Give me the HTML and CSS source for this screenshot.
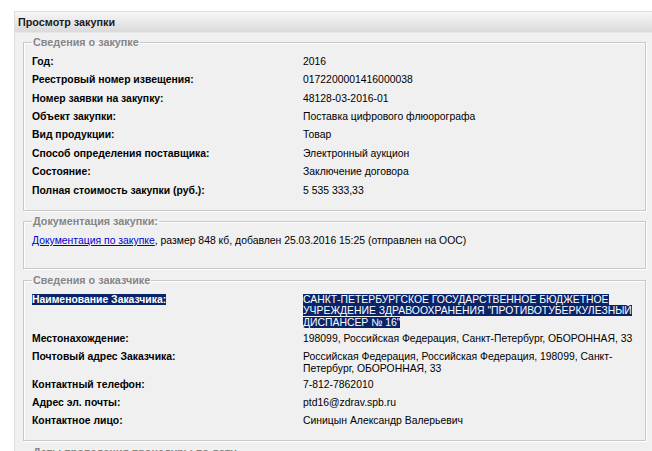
FILE: index.html
```html
<!DOCTYPE html>
<html lang="ru">
<head>
    <meta charset="UTF-8">
    <title>Просмотр закупки</title>
    <link rel="stylesheet" href="styles.css">
</head>
<body>

    <div class="panel">
        <div class="panel-header">Просмотр закупки</div>

        <div class="panel-body">
            <fieldset class="group">
                <legend>Сведения о закупке</legend>
                <table class="info">
                    <tr><td class="label">Год:</td><td>2016</td></tr>
                    <tr><td class="label">Реестровый номер извещения:</td><td>0172200001416000038</td></tr>
                    <tr><td class="label">Номер заявки на закупку:</td><td>48128-03-2016-01</td></tr>
                    <tr><td class="label">Объект закупки:</td><td>Поставка цифрового флюорографа</td></tr>
                    <tr><td class="label">Вид продукции:</td><td>Товар</td></tr>
                    <tr><td class="label">Способ определения поставщика:</td><td>Электронный аукцион</td></tr>
                    <tr><td class="label">Состояние:</td><td>Заключение договора</td></tr>
                    <tr><td class="label">Полная стоимость закупки (руб.):</td><td>5 535 333,33</td></tr>
                </table>
            </fieldset>

            <fieldset class="group docs">
                <legend>Документация закупки:</legend>
                <p class="doc-line"><a href="#">Документация по закупке</a>, размер 848 кб, добавлен 25.03.2016 15:25 (отправлен на ООС)</p>
            </fieldset>

            <fieldset class="group">
                <legend>Сведения о заказчике</legend>
                <table class="info">
                    <tr class="tight">
                        <td class="label"><span class="sel">Наименование Заказчика:</span></td>
                        <td class="nowrap"><span class="sel">САНКТ-ПЕТЕРБУРГСКОЕ ГОСУДАРСТВЕННОЕ БЮДЖЕТНОЕ </span><br><span class="sel">УЧРЕЖДЕНИЕ ЗДРАВООХРАНЕНИЯ "ПРОТИВОТУБЕРКУЛЕЗНЫЙ </span><br><span class="sel">ДИСПАНСЕР № 16"</span></td>
                    </tr>
                    <tr><td class="label">Местонахождение:</td><td>198099, Российская Федерация, Санкт-Петербург, ОБОРОННАЯ, 33</td></tr>
                    <tr class="tight"><td class="label">Почтовый адрес Заказчика:</td><td class="nowrap">Российская Федерация, Российская Федерация, 198099, Санкт-<br>Петербург, ОБОРОННАЯ, 33</td></tr>
                    <tr><td class="label">Контактный телефон:</td><td>7-812-7862010</td></tr>
                    <tr><td class="label">Адрес эл. почты:</td><td>ptd16@zdrav.spb.ru</td></tr>
                    <tr><td class="label">Контактное лицо:</td><td>Синицын Александр Валерьевич</td></tr>
                </table>
            </fieldset>

            <fieldset class="group">
                <legend>Даты проведения процедуры по лоту</legend>
                <table class="info">
                    <tr><td class="label">Дата публикации:</td><td>25.03.2016</td></tr>
                </table>
            </fieldset>
        </div>
    </div>

</body>
</html>
```

FILE: styles.css
```css
html {
    overflow: hidden;
}

body {
    margin: 0;
    padding: 11px 0 0 14px;
    background-color: #ffffff;
    font-family: "Liberation Sans", Arial, sans-serif;
    font-size: 10.4px;
    color: #000000;
}

.panel {
    width: 660px;
    border: 1px solid #dddddd;
    border-right: none;
    background-color: #f0f0f0;
}

.panel-header {
    height: 20px;
    line-height: 20px;
    padding-left: 3px;
    font-size: 10.8px;
    font-weight: bold;
    color: #1a1a1a;
    background: linear-gradient(#f6f6f6, #dadada);
    border-bottom: 1px solid #e6e6e6;
}

.panel-body {
    padding: 2.5px 0 0 8px;
}

.group {
    width: 605px;
    margin: 0 0 4.5px 0;
    padding: 4px 8px 10px 8px;
    border: 1px solid #c8c8c8;
    box-shadow: 1px 1px 0 #ffffff, inset 1px 1px 0 #ffffff;
}

.group legend {
    padding: 0 1px;
    line-height: 13px;
    font-size: 10.8px;
    font-weight: bold;
    color: #858585;
}

.info {
    border-collapse: collapse;
    width: 100%;
}

.info td {
    padding: 3.45px 0;
    line-height: 11.5px;
    vertical-align: top;
}

.info .tight td {
    padding-bottom: 1px;
}

.info .label {
    width: 271px;
    font-weight: bold;
}

.info .nowrap {
    white-space: nowrap;
}

.sel {
    background-color: #0a246a;
    color: #ffffff;
}

.doc-line {
    margin: 3px 0 11px 0;
    line-height: 12px;
}

.doc-line a {
    color: #0000cc;
}
```
